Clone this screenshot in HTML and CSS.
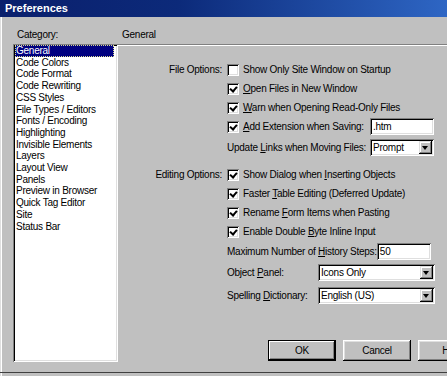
FILE: index.html
```html
<!DOCTYPE html>
<html lang="en">
<head>
    <meta charset="UTF-8">
    <meta name="viewport" content="width=device-width, initial-scale=1.0">
    <title>Preferences</title>
    <link rel="stylesheet" href="styles.css">
</head>
<body>
    <div class="window">
        <div class="titlebar">Preferences</div>
        <div class="dialog">
            <div class="sidebar">
                <div class="caption">Category:</div>
                <ul class="category-list">
                    <li class="selected">General</li>
                    <li>Code Colors</li>
                    <li>Code Format</li>
                    <li>Code Rewriting</li>
                    <li>CSS Styles</li>
                    <li>File Types / Editors</li>
                    <li>Fonts / Encoding</li>
                    <li>Highlighting</li>
                    <li>Invisible Elements</li>
                    <li>Layers</li>
                    <li>Layout View</li>
                    <li>Panels</li>
                    <li>Preview in Browser</li>
                    <li>Quick Tag Editor</li>
                    <li>Site</li>
                    <li>Status Bar</li>
                </ul>
            </div>

            <div class="main">
                <div class="caption panel-caption">General</div>
                <div class="groove"></div>

                <div class="section file-section">
                    <div class="section-label">File Options:</div>
                    <div class="section-body">
                        <label class="row check-row"><span class="box"></span><span>Show Only Site Window on Startup</span></label>
                        <label class="row check-row"><span class="box checked"></span><span><u>O</u>pen Files in New Window</span></label>
                        <label class="row check-row"><span class="box checked"></span><span><u>W</u>arn when Opening Read-Only Files</span></label>
                        <label class="row check-row"><span class="box checked"></span><span><u>A</u>dd Extension when Saving:</span>
                            <span class="field ext-field">.htm</span>
                        </label>
                        <div class="row select-row"><span>Update <u>L</u>inks when Moving Files:</span>
                            <span class="field select links-select">Prompt<span class="drop"></span></span>
                        </div>
                    </div>
                </div>

                <div class="section edit-section">
                    <div class="section-label">Editing Options:</div>
                    <div class="section-body">
                        <label class="row check-row"><span class="box checked"></span><span>Show Dialog when <u>I</u>nserting Objects</span></label>
                        <label class="row check-row"><span class="box checked"></span><span>Faster <u>T</u>able Editing (Deferred Update)</span></label>
                        <label class="row check-row"><span class="box checked"></span><span>Rename <u>F</u>orm Items when Pasting</span></label>
                        <label class="row check-row"><span class="box checked"></span><span>Enable Double <u>B</u>yte Inline Input</span></label>
                        <div class="row history-row"><span>Maximum Number of <u>H</u>istory Steps:</span>
                            <span class="field history-field">50</span>
                        </div>
                        <div class="row panel-row"><span>Object <u>P</u>anel:</span>
                            <span class="field select wide-select">Icons Only<span class="drop"></span></span>
                        </div>
                        <div class="row spell-row"><span>Spelling <u>D</u>ictionary:</span>
                            <span class="field select wide-select">English (US)<span class="drop"></span></span>
                        </div>
                    </div>
                </div>

                <div class="buttons">
                    <button class="btn default">OK</button>
                    <button class="btn">Cancel</button>
                    <button class="btn">Help</button>
                </div>
            </div>
        </div>
    </div>
</body>
</html>
```

FILE: styles.css
```css
html, body {
    margin: 0;
    padding: 0;
    overflow: hidden;
}
body {
    font-family: "Liberation Sans", Arial, sans-serif;
    font-size: 10px;
    letter-spacing: -0.25px;
    color: #000;
    background: #c0c0c0;
}
.window {
    width: 447px;
    height: 376px;
    overflow: hidden;
    box-shadow: inset 1px 0 #dfdfdf, inset 2px 0 #fff;
}
.titlebar {
    height: 17px;
    line-height: 17px;
    padding-left: 5px;
    font-size: 11px;
    font-weight: bold;
    letter-spacing: 0;
    color: #fff;
    background: linear-gradient(90deg, #0a1f6c 0%, #0c2a7a 40%, #2e66c4 100%);
}
.dialog {
    display: flex;
    height: 355px;
    padding-left: 13px;
    border-bottom: 1px solid #404040;
}

/* category list */
.sidebar {
    width: 105px;
    flex: none;
}
.caption {
    height: 27px;
    box-sizing: border-box;
    padding-top: 12px;
    line-height: 12px;
    padding-left: 4px;
}
.category-list {
    list-style: none;
    margin: 0;
    padding: 1px 2px;
    height: 318px;
    box-sizing: border-box;
    background: #fff;
    box-shadow: inset 1px 1px #808080, inset -1px -1px #fff, inset 2px 2px #000, inset -2px -2px #dfdfdf;
    overflow: hidden;
}
.category-list li {
    line-height: 11.7px;
    padding-left: 1px;
    margin-right: 2px;
    white-space: nowrap;
}
.category-list li.selected {
    background: #000080;
    color: #fff;
    outline: 1px dotted #d8d890;
    outline-offset: -1px;
}

/* right panel */
.main {
    flex: 1;
    min-width: 0;
}
.panel-caption {
    padding-left: 4px;
}
.groove {
    height: 1px;
    border-top: 1px solid #808080;
    background: #fff;
}
.section {
    display: grid;
    grid-template-columns: 104px 208px;
    column-gap: 5px;
}
.file-section {
    margin-top: 14px;
}
.edit-section {
    margin-top: 7px;
}
.section-label {
    line-height: 19px;
    text-align: right;
    white-space: nowrap;
}
.row {
    display: flex;
    align-items: center;
    white-space: nowrap;
}
.check-row {
    height: 19px;
}
.select-row {
    height: 22px;
}
.history-row {
    height: 20px;
}
.panel-row {
    height: 23px;
}
.spell-row {
    height: 22px;
}
u {
    text-decoration: underline;
    text-underline-offset: 1px;
}

.box {
    position: relative;
    width: 12px;
    height: 12px;
    margin-right: 4px;
    flex: none;
    background: #fff;
    box-shadow: inset 1px 1px #808080, inset -1px -1px #fff, inset 2px 2px #000, inset -2px -2px #dfdfdf;
}
.box.checked::after {
    content: "";
    position: absolute;
    left: 3px;
    top: 2px;
    width: 5px;
    height: 3px;
    border-left: 2px solid #000;
    border-bottom: 2px solid #000;
    transform: translate(0, 1px) rotate(-50deg);
    transform-origin: 50% 50%;
}

.field {
    position: relative;
    display: flex;
    align-items: center;
    height: 17px;
    box-sizing: border-box;
    padding-left: 3px;
    margin-left: auto;
    background: #fff;
    box-shadow: inset 1px 1px #808080, inset -1px -1px #fff, inset 2px 2px #000, inset -2px -2px #dfdfdf;
}
.ext-field {
    width: 64px;
    margin-right: 1px;
}
.links-select {
    width: 64px;
    margin-right: 1px;
}
.history-field {
    width: 55px;
    margin-right: 4px;
}
.wide-select {
    width: 117px;
}
.drop {
    position: absolute;
    right: 2px;
    top: 2px;
    width: 13px;
    height: 13px;
    background: #c0c0c0;
    box-shadow: inset -1px -1px #000, inset 1px 1px #dfdfdf, inset -2px -2px #808080, inset 2px 2px #fff;
}
.drop::after {
    content: "";
    position: absolute;
    left: 3px;
    top: 5px;
    border-left: 3.5px solid transparent;
    border-right: 3.5px solid transparent;
    border-top: 4px solid #000;
}

/* buttons */
.buttons {
    display: flex;
    gap: 7px;
    margin-top: 34px;
    padding-left: 150px;
}
.btn {
    flex: none;
    width: 68px;
    height: 21px;
    padding: 0;
    border: none;
    font-family: inherit;
    font-size: 10px;
    letter-spacing: -0.25px;
    color: #000;
    background: #c0c0c0;
    box-shadow: inset -1px -1px #000, inset 1px 1px #fff, inset -2px -2px #808080, inset 2px 2px #dfdfdf;
}
.btn.default {
    box-shadow: inset 0 0 0 1px #000, inset -2px -2px #000, inset 2px 2px #fff, inset -3px -3px #808080;
}
```
